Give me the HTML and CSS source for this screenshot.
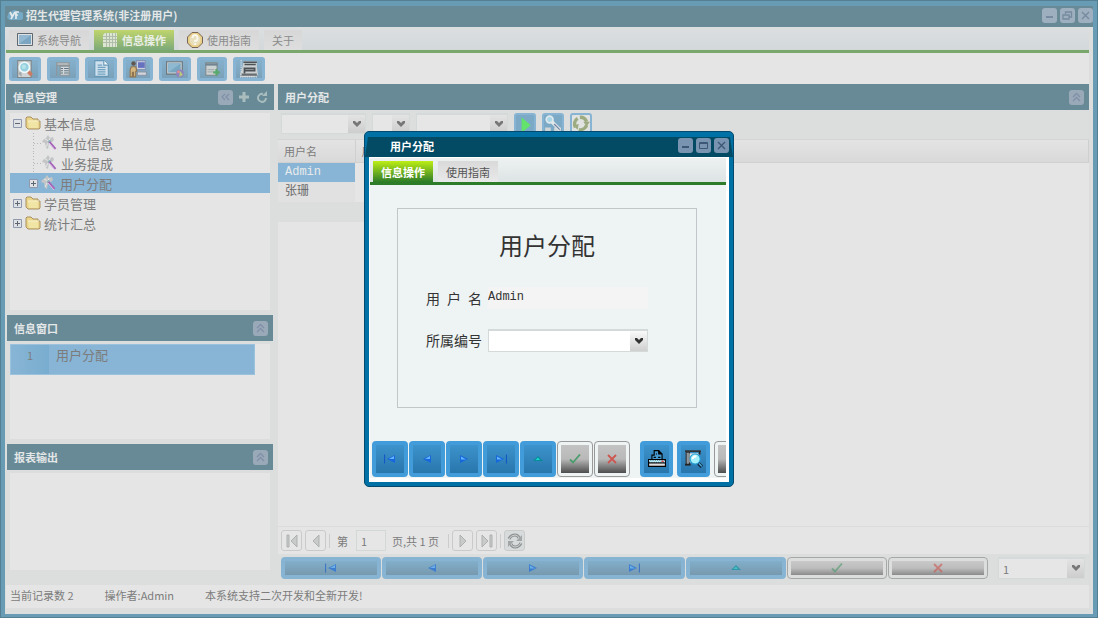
FILE: index.html
```
<!DOCTYPE html>
<html lang="zh-CN">
  <head>
    <title>招生代理管理系统</title>
    <meta charset="UTF-8">
    <meta name="viewport" content="width=device-width, initial-scale=1">
    <link rel="stylesheet" href="styles.css">
  </head>
  <body>
    <!-- shared icons -->
    <svg class="defs" aria-hidden="true">
      <symbol id="i-arrow" viewBox="0 0 10 8"><path d="M1 1h2l2 2 2-2h2v2L5 7 1 3z" fill="currentColor"/></symbol>
      <symbol id="i-up" viewBox="0 0 15 15"><path d="M4 7l3.500-3.500L11 7M4 11l3.500-3.500L11 11" fill="none" stroke="#8190a8" stroke-width="1.300"/></symbol>
      <symbol id="i-min" viewBox="0 0 15 15"><path d="M4 9h7" fill="none" stroke="currentColor" stroke-width="2"/></symbol>
      <symbol id="i-max" viewBox="0 0 15 15"><path d="M3.500 4.500h8v6h-8zM3 5.500h9" fill="none" stroke="currentColor"/></symbol>
      <symbol id="i-restore" viewBox="0 0 15 15"><path d="M5.500 6V4h6v5H9M3 7h6v4H3z" fill="none" stroke="currentColor" stroke-width="1.300"/></symbol>
      <symbol id="i-close" viewBox="0 0 15 15"><path d="M4 4l7 7M11 4l-7 7" fill="none" stroke="currentColor" stroke-width="1.400"/></symbol>
      <symbol id="i-first" viewBox="0 0 12 10"><path d="M.5.500v9" stroke="#1458c8" stroke-width="1.200"/><path d="M11 1v8L3 5z" fill="#1767dc"/><path d="M10 2v3H5z" fill="#63b5ff"/></symbol>
      <symbol id="i-prev" viewBox="0 0 12 10"><path d="M10 1v8L2 5z" fill="#1767dc"/><path d="M9 2v3H4z" fill="#63b5ff"/></symbol>
      <symbol id="i-next" viewBox="0 0 12 10"><path d="M2 1v8l8-4z" fill="#1767dc"/><path d="M3 2.500v3h5z" fill="#63b5ff"/></symbol>
      <symbol id="i-last" viewBox="0 0 12 10"><path d="M11.500.500v9" stroke="#1458c8" stroke-width="1.200"/><path d="M1 1v8l8-4z" fill="#1767dc"/><path d="M2 2.500v3h5z" fill="#63b5ff"/></symbol>
      <symbol id="i-top" viewBox="0 0 12 10"><path d="M1 7l5-5 5 5z" fill="#078c98"/><path d="M3.500 6L6 3.500 8 6z" fill="#1dd6d3"/></symbol>
      <symbol id="i-ok" viewBox="0 0 12 10"><path d="M1 5.500l3 3 7-8" fill="none" stroke="#4c9c6d" stroke-width="1.800"/></symbol>
      <symbol id="i-no" viewBox="0 0 12 10"><path d="M2 1l8 8M10 1L2 9" fill="none" stroke="#cd5650" stroke-width="1.800"/></symbol>
      <symbol id="i-folder" viewBox="0 0 16 14"><path d="M1 11V2l1-1h4l2 2h5v2h2v7l-1 1H3z" fill="#ead589" stroke="#a89062"/><path d="M3 5h10v7H4z" fill="#f0e5a4"/><path d="M3 5h11" stroke="#faf2cf"/></symbol>
      <symbol id="i-wand" viewBox="0 0 16 16"><path d="M1 5l3-2 2-3 2 3 3-1 1 3-2 2-3 1-1 6-2-1-1-5-3-1z" fill="#c3c5c6"/><path d="M3 4l4 2 1-3M6 8l-2 4" stroke="#e5e5e5" fill="none"/><circle cx="7.500" cy="6.500" r="1.500" fill="#8ab2ba"/><path d="M7.500 7l6 7" stroke="#a464b8" stroke-width="2"/><path d="M7 8l6 7" stroke="#dec3e6"/></symbol>
      <symbol id="i-plus" viewBox="0 0 9 9"><path d="M.5.5h8v8h-8z" fill="#dfe1e5" stroke="#8e99ad"/><path d="M2 4.500h5M4.500 2v5" stroke="#5e6673"/></symbol>
      <symbol id="i-minus" viewBox="0 0 9 9"><path d="M.5.5h8v8h-8z" fill="#dfe1e5" stroke="#8e99ad"/><path d="M2 4.500h5" stroke="#5e6673"/></symbol>
    </svg>

    <header class="titlebar">
      <svg class="logo" viewBox="0 0 16 14"><path d="M3 12a3 3 0 0 1-2-5 3 3 0 0 1 3-3 4 4 0 0 1 7 0 4 4 0 0 1 3 8z" fill="#75a9c5"/><path d="M3 4l2 4M8 4l-4 7M12 4H9v7M8 7h3" fill="none" stroke="#e3e9ec" stroke-width="1.700"/></svg>
      <h1>招生代理管理系统(非注册用户)</h1>
      <button class="tool" aria-label="最小化"><svg><use href="#i-min"/></svg></button>
      <button class="tool" aria-label="还原"><svg><use href="#i-restore"/></svg></button>
      <button class="tool" aria-label="关闭"><svg><use href="#i-close"/></svg></button>
    </header>

    <div class="window">
      <nav class="tabs">
        <button class="tab"><svg viewBox="0 0 16 16"><path d="M.5 1.500h15v12H.5z" fill="#dfe2e3" stroke="#5f6770"/><path d="M2 3h12v9H2z" fill="#7ba5c0"/><path d="M2 12L14 3H2z" fill="#93b9d2"/></svg>系统导航</button>
        <button class="tab active"><svg viewBox="0 0 16 16"><path d="M3 1h12v14H1V3z" fill="#dce6d3"/><path d="M1 4.500h14M1 7.500h14M1 10.500h14M4.500 1v14M7.500 1v14M10.500 1v14M13.500 1v14" stroke="#b1bdab"/></svg>信息操作</button>
        <button class="tab"><svg viewBox="0 0 16 16"><path d="M5 .500h6L15.500 5v6L11 15.500H5L.5 11V5z" fill="#e9cf86" stroke="#77675b"/><circle cx="8" cy="8" r="5.500" fill="#e8dfbd"/><path d="M5.500 6q0-3 2.500-3t2.500 3-2.500 3v1M8 11v2" stroke="#faf8ed" stroke-width="1.800" fill="none"/></svg>使用指南</button>
        <button class="tab">关于</button>
      </nav>

      <div class="toolbar">
        <button aria-label="查询"><svg viewBox="0 0 16 16"><path d="M1.500.500h12v15h-12z" fill="#cfd3d5" stroke="#7e878c"/><path d="M2 12l3-3v6z" fill="#a5aaac"/><circle cx="7.500" cy="6.500" r="4.500" fill="#93cfdf" stroke="#eef7f9" stroke-width="1.500"/><circle cx="7" cy="6" r="2" fill="#b6e3ea"/><path d="M11 10.500l3 3" stroke="#cd7b61" stroke-width="3"/></svg></button>
        <button aria-label="列表"><svg viewBox="0 0 16 16"><path d="M2.500 2.500h11v2h-11zM5.500 5.500h8v8h-8zM2.500 5v9" fill="#d3d9dc" stroke="#8d9496"/><path d="M6 7.500h2m1 0h4M6 9.500h2m1 0h4M6 11.500h2m1 0h4" stroke="#5f7480"/></svg></button>
        <button aria-label="文档"><svg viewBox="0 0 16 16"><path d="M2.500.500h8l4 4v10h-12z" fill="#cfe1ec" stroke="#6498b7"/><path d="M10.500.500v4h4" fill="#fff" stroke="#6498b7"/><path d="M5 4.500h4M5 6.500h7M5 8.500h7M5 10.500h7M5 12.500h7" stroke="#71a3c1"/></svg></button>
        <button class="narrow" aria-label="用户"><svg viewBox="0 0 16 16"><path d="M6.500.500h8v8h-8z" fill="#ccd2dc" stroke="#8695b5"/><path d="M8 2h6v5H8z" fill="#6671c0"/><path d="M7.500 10.500h8v3h-8z" fill="#d4d6db" stroke="#8795a8"/><circle cx="4" cy="3" r="2" fill="#60584f"/><path d="M2 6h4l1 4H6v5H4v-4H3v4H1V9z" fill="#d5b67f" stroke="#8d7553"/></svg></button>
        <button aria-label="网络"><svg viewBox="0 0 16 16"><path d="M.5 1.500h14v11H.5z" fill="#c5ced2" stroke="#6d777e"/><path d="M2 3h11v8H2z" fill="#79a6c0"/><path d="M2 11l11-8H2z" fill="#8fb9d1"/><circle cx="12.500" cy="12" r="3.500" fill="#8d84bd"/><path d="M12 9l3 4-3 2z" fill="#b9cb7a"/><path d="M10 11l2-1" stroke="#df8a95" stroke-width="2"/></svg></button>
        <button class="narrow" aria-label="添加"><svg viewBox="0 0 16 16"><path d="M2.500 2.500h10v11h-10z" fill="#ccd1d2" stroke="#7f898c"/><path d="M2 4h11" stroke="#708591" stroke-width="2"/><path d="M4 8.500h6M4 10.500h5" stroke="#a7afb1"/><path d="M12 8v6M9 11h6" stroke="#5aa96c" stroke-width="2"/></svg></button>
        <button aria-label="打印"><svg viewBox="0 0 16 16"><path d="M3 1h12v5l1 7-3 2H2l-2-2 2-6z" fill="#cbd0d2"/><path d="M3 2h12M4 4h10M4 7.500h9v2H4zM4 7v5" fill="none" stroke="#4b5155" stroke-width="1.500"/><path d="M1 13h14" stroke="#686d70" stroke-width="2"/><path d="M1 0v16M0 15h16" stroke="#dce2e5" stroke-dasharray="1 1"/></svg></button>
      </div>

      <main class="layout">
        <aside class="side">
          <section class="panel tree-panel">
            <header class="panel-head"><h2>信息管理</h2>
              <button class="tool" aria-label="收起"><svg viewBox="0 0 15 15"><path d="M7 4L4 7l3 3M11 4L8 7l3 3" fill="none" stroke="#8190a8" stroke-width="1.300"/></svg></button>
              <button class="plain" aria-label="添加"><svg viewBox="0 0 12 12"><path d="M6 1v10M1 6h10" stroke="#a9bdbf" stroke-width="3"/></svg></button>
              <button class="plain" aria-label="刷新"><svg viewBox="0 0 12 12"><path d="M7 3A4 4 0 1 0 10 7" fill="none" stroke="#a9bdbf" stroke-width="2"/><path d="M6 5l5-5v5z" fill="#a9bdbf"/></svg></button>
            </header>
            <div class="panel-body">
              <ul class="tree">
                <li><svg class="exp"><use href="#i-minus"/></svg><svg class="folder"><use href="#i-folder"/></svg>基本信息</li>
                <li class="child leaf"><svg class="wand"><use href="#i-wand"/></svg>单位信息</li>
                <li class="child leaf"><svg class="wand"><use href="#i-wand"/></svg>业务提成</li>
                <li class="child selected"><svg class="exp"><use href="#i-plus"/></svg><svg class="wand"><use href="#i-wand"/></svg>用户分配</li>
                <li><svg class="exp"><use href="#i-plus"/></svg><svg class="folder"><use href="#i-folder"/></svg>学员管理</li>
                <li><svg class="exp"><use href="#i-plus"/></svg><svg class="folder"><use href="#i-folder"/></svg>统计汇总</li>
              </ul>
            </div>
          </section>

          <section class="panel list-panel">
            <header class="panel-head"><h2>信息窗口</h2><button class="tool" aria-label="折叠"><svg><use href="#i-up"/></svg></button></header>
            <div class="panel-body">
              <div class="list">
                <div class="list-row"><span class="num">1</span><span class="name">用户分配</span></div>
              </div>
            </div>
          </section>

          <section class="panel report-panel">
            <header class="panel-head"><h2>报表输出</h2><button class="tool" aria-label="折叠"><svg><use href="#i-up"/></svg></button></header>
            <div class="panel-body"><div class="list"></div></div>
          </section>
        </aside>

        <section class="content">
          <header class="panel-head"><h2>用户分配</h2><button class="tool" aria-label="折叠"><svg><use href="#i-up"/></svg></button></header>
          <div class="filter">
            <span class="combo c-field"><select aria-label="字段"><option></option></select><svg><use href="#i-arrow"/></svg></span>
            <span class="combo c-op"><select aria-label="条件"><option></option></select><svg><use href="#i-arrow"/></svg></span>
            <span class="combo c-value"><select aria-label="值"><option></option></select><svg><use href="#i-arrow"/></svg></span>
            <button aria-label="执行"><svg viewBox="0 0 16 16"><path d="M5 2l8 7-8 7z" fill="#64e36c"/></svg></button>
            <button aria-label="查找"><svg viewBox="0 0 16 16"><path d="M1 11h5v5H1zM9 11h6v5H9z" fill="#d0d5d8"/><circle cx="5" cy="4" r="3" fill="#a9d7e8" stroke="#dfe9ed" stroke-width="1.500"/><path d="M7 6l7 7" stroke="#e3e8ea" stroke-width="3"/><path d="M9 8l5 5" stroke="#6c7fa0"/></svg></button>
            <button class="light" aria-label="刷新"><svg viewBox="0 0 16 16"><path d="M3 11A6 6 0 0 1 5 3M7 2a6 6 0 0 1 6 4M13 9a6 6 0 0 1-7 4" fill="none" stroke="#9dac80" stroke-width="3"/><path d="M1 9l5-1-1 5zM10 6h6l-3 4z" fill="#9dac80"/></svg></button>
          </div>
          <div class="grid">
            <table>
              <thead><tr><th class="col-name">用户名</th><th>用户</th></tr></thead>
              <tbody>
                <tr><td class="picked">Admin</td><td></td></tr>
                <tr class="alt"><td>张珊</td><td></td></tr>
                <tr class="sum"><td></td><td></td></tr>
              </tbody>
            </table>
          </div>
          <div class="paging">
            <button aria-label="首页"><svg viewBox="0 0 16 16"><path d="M3 2h2v12H3zM13 2v12L7 8z" fill="#c9caca" stroke="#adb0b1"/></svg></button>
            <button aria-label="上一页"><svg viewBox="0 0 16 16"><path d="M11 2v12L5 8z" fill="#c9caca" stroke="#adb0b1"/></svg></button>
            <i class="sep"></i>
            <label for="page">第</label>
            <input type="text" id="page" value="1">
            <span class="total">页,共 1 页</span>
            <i class="sep"></i>
            <button aria-label="下一页"><svg viewBox="0 0 16 16"><path d="M5 2v12l6-6z" fill="#c9caca" stroke="#adb0b1"/></svg></button>
            <button aria-label="末页"><svg viewBox="0 0 16 16"><path d="M3 2v12l6-6zM11 2h2v12h-2z" fill="#c9caca" stroke="#adb0b1"/></svg></button>
            <i class="sep"></i>
            <button class="reload" aria-label="刷新"><svg viewBox="0 0 16 16"><path d="M2 6q2-4 6-4 3 0 4 3M14 10q-2 4-6 4-3 0-4-3" fill="none" stroke="#8f9292" stroke-width="3"/><path d="M2 6q2-4 6-4 3 0 4 3M14 10q-2 4-6 4-3 0-4-3" fill="none" stroke="#cfd1d1"/><path d="M15 2v6H9zM1 14V8h6z" fill="#a3a6a6"/></svg></button>
          </div>
          <div class="navbar">
            <div class="nav-group">
              <button class="nav" aria-label="第一条"><svg><use href="#i-first"/></svg></button>
              <button class="nav" aria-label="上一条"><svg><use href="#i-prev"/></svg></button>
              <button class="nav" aria-label="下一条"><svg><use href="#i-next"/></svg></button>
              <button class="nav" aria-label="最后一条"><svg><use href="#i-last"/></svg></button>
              <button class="nav" aria-label="编辑"><svg><use href="#i-top"/></svg></button>
              <button class="nav off" aria-label="保存"><svg><use href="#i-ok"/></svg></button>
              <button class="nav off" aria-label="取消"><svg><use href="#i-no"/></svg></button>
            </div>
            <span class="combo c-page"><select aria-label="页码"><option>1</option></select><svg><use href="#i-arrow"/></svg></span>
          </div>
        </section>
      </main>

      <footer class="status">
        <span>当前记录数 2</span><span>操作者:Admin</span><span>本系统支持二次开发和全新开发!</span>
      </footer>
    </div>

    <div class="dialog" role="dialog" aria-labelledby="dlg-title">
      <header class="dialog-head">
        <h2 id="dlg-title">用户分配</h2>
        <button class="tool" aria-label="最小化"><svg><use href="#i-min"/></svg></button>
        <button class="tool" aria-label="最大化"><svg><use href="#i-max"/></svg></button>
        <button class="tool" aria-label="关闭"><svg><use href="#i-close"/></svg></button>
      </header>
      <div class="dialog-body">
        <nav class="dialog-tabs">
          <button class="tab active">信息操作</button>
          <button class="tab">使用指南</button>
        </nav>
        <form class="form">
          <h3>用户分配</h3>
          <div class="row">
            <label for="user" class="spread"><span>用</span><span>户</span><span>名</span></label>
            <input type="text" id="user" value="Admin" readonly>
          </div>
          <div class="row">
            <label for="code">所属编号</label>
            <span class="combo c-code"><select id="code"><option></option></select><svg><use href="#i-arrow"/></svg></span>
          </div>
        </form>
        <div class="actions">
          <button class="nav" aria-label="第一条"><svg><use href="#i-first"/></svg></button>
          <button class="nav" aria-label="上一条"><svg><use href="#i-prev"/></svg></button>
          <button class="nav" aria-label="下一条"><svg><use href="#i-next"/></svg></button>
          <button class="nav" aria-label="最后一条"><svg><use href="#i-last"/></svg></button>
          <button class="nav" aria-label="编辑"><svg><use href="#i-top"/></svg></button>
          <button class="nav off" aria-label="保存"><svg><use href="#i-ok"/></svg></button>
          <button class="nav off" aria-label="取消"><svg><use href="#i-no"/></svg></button>
          <button class="nav big" aria-label="打印"><svg viewBox="0 0 16 16"><path d="M3.500 8V4.500h2v-4h4l3 3V8" fill="#459bd1" stroke="#000"/><path d="M9.500.500v3h3M7 3.500h1M5 6.500h2M9 6.500h2" stroke="#000"/><path d="M.5 8.500h15v3H.5z" fill="#6dd4ec" stroke="#000"/><path d="M1 9.500h14M2 10.500h13" stroke="#fff" stroke-dasharray="1 1"/><path d="M.5 11.500h15v3H.5z" fill="#ddd" stroke="#000"/><path d="M12 10h2" stroke="#e22"/></svg></button>
          <button class="nav big" aria-label="预览"><svg viewBox="0 0 16 16"><path d="M0 1h14" stroke="#333" stroke-width="1.500"/><path d="M1 2h3v11H1z" fill="#8d979d" stroke="#333"/><path d="M4 3h8v8H4z" fill="#e3e8ea"/><path d="M0 13h5M13 1v3" stroke="#222" stroke-width="1.500"/><circle cx="9" cy="8" r="4.500" fill="#a4effc" stroke="#249ed3"/><path d="M7 8a2 2 0 0 1 3-2" stroke="#fff" stroke-width="2" fill="none"/><path d="M12 12l3 3" stroke="#102840" stroke-width="3"/><path d="M12.500 12l2.500 2.500" stroke="#59bfed"/></svg></button>
          <button class="nav off big" aria-label="更多"></button>
        </div>
      </div>
    </div>
  </body>
</html>
```
FILE: styles.css
```
* {
	box-sizing: border-box;
}
body {
	margin: 0;
	min-height: 100vh;
	display: flex;
	flex-direction: column;
	background-color: #689cb5;
	border: 1px solid #557f93;
	padding: 0 4px 3px;
	font-family: "Noto Sans CJK SC", sans-serif;
	font-size: 11px;
	color: #7c7c7c;
}
h1, h2, h3, ul {
	margin: 0;
	padding: 0;
}
h1, h2 {
	font-size: 11px;
	line-height: 16px;
	font-weight: bold;
	color: #e4e7e8;
	flex: 1;
}
button, input, select {
	font-family: inherit;
	font-size: inherit;
	color: inherit;
	margin: 0;
	padding: 0;
	border: none;
	border-radius: 0;
}
.defs {
	position: absolute;
	width: 0;
	height: 0;
}

/* main window */
.titlebar {
	display: flex;
	align-items: center;
	height: 26px;
	gap: 3px;
	padding: 0 0 3px 2px;
	border-top: 5px solid #689cb5;
	background-color: #688a96;
}
.logo {
	width: 16px;
	height: 14px;
}
.tool {
	width: 15px;
	height: 15px;
	border-radius: 3px;
	background-color: #9eafbf;
	color: #768aa0;
}
.tool svg, .plain svg {
	display: block;
	width: 100%;
	height: 100%;
}
.window {
	flex: 1;
	display: flex;
	flex-direction: column;
	border: 1px solid #dcdedd;
	border-width: 0 4px 6px 1px;
	background-color: #e5e5e5;
}
.tabs {
	display: flex;
	gap: 5px;
	height: 26px;
	padding: 3px 3px 0;
	background: linear-gradient(#dcdfe0, #d3d8da);
	border-bottom: 3px solid #7aa76b;
}
.tab {
	display: flex;
	align-items: center;
	gap: 4px;
	height: 20px;
	padding: 0 8px;
	background: linear-gradient(#d7d7d7, #dedede);
	color: #8b8b8b;
	white-space: nowrap;
}
.tab svg {
	width: 16px;
	height: 16px;
}
.tab.active {
	background: linear-gradient(#bfd56d, #7da979);
	color: #e9eee6;
	font-weight: bold;
}
.toolbar {
	display: flex;
	align-items: center;
	gap: 6px;
	height: 31px;
	padding: 0 3px;
}
.toolbar button {
	width: 32px;
	height: 24px;
	border: 3px solid #88b4d3;
	border-radius: 3px;
	background: linear-gradient(#85b0cc, #7ba1b9);
}
.toolbar .narrow {
	width: 30px;
}
.toolbar svg {
	display: block;
	width: 18px;
	height: 18px;
	margin: auto;
}
.layout {
	flex: 1;
	display: grid;
	grid-template-columns: 268px 1fr;
	gap: 4px;
	background-color: #dcdedd;
}

/* panels */
.panel-head {
	display: flex;
	align-items: center;
	gap: 4px;
	height: 26px;
	padding: 0 5px 0 7px;
	background-color: #688a96;
}
.panel-head .tool {
	background-color: #99a9b8;
}
.plain {
	width: 14px;
	height: 14px;
	padding: 1px;
	background: none;
}
.side {
	display: flex;
	flex-direction: column;
}
.panel {
	display: flex;
	flex-direction: column;
}
.list-panel, .report-panel {
	margin: 0 1px;
}
.tree-panel {
	height: 231px;
}
.list-panel {
	height: 129px;
}
.report-panel {
	flex: 1;
}
.panel-body {
	flex: 1;
	display: flex;
	padding: 3px 4px 5px;
}
.list-panel .panel-body, .report-panel .panel-body {
	padding-left: 3px;
	padding-right: 3px;
}
.report-panel .panel-body {
	padding-bottom: 15px;
}
.tree, .list {
	flex: 1;
	background-color: #e5e5e5;
}
.tree {
	list-style: none;
	font-size: 13px;
}
.tree li {
	display: flex;
	align-items: center;
	height: 20px;
	gap: 3px;
	padding-left: 3px;
}
.tree .child {
	padding-left: 19px;
}
.tree .leaf {
	padding-left: 32px;
	background: repeating-linear-gradient(#b8b8b8 0 1px, transparent 1px 3px) 23px 0 / 1px 100% no-repeat,
		repeating-linear-gradient(90deg, #b8b8b8 0 1px, transparent 1px 3px) 24px 10px / 7px 1px no-repeat;
}
.tree .selected {
	background-color: #88b5d5;
}
.exp {
	width: 9px;
	height: 9px;
}
.folder {
	width: 16px;
	height: 14px;
}
.wand {
	width: 16px;
	height: 16px;
}
.list-row {
	display: flex;
	width: 245px;
	height: 31px;
	background-color: #88b5d5;
	border: 1px solid #9bc2dc;
}
.list-row .num {
	width: 38px;
	line-height: 20px;
	text-align: center;
	background: linear-gradient(90deg, #88b5d5, #79adcf);
}
.list-row .name {
	padding-left: 7px;
	font-size: 13px;
	line-height: 19px;
}

/* right side */
.content {
	display: flex;
	flex-direction: column;
}
.filter {
	display: flex;
	height: 29px;
	padding: 3px;
	gap: 6px;
	overflow: hidden;
}
.filter button {
	width: 22px;
	height: 22px;
	border: 2px solid #88b4d3;
	border-radius: 3px;
	background-color: #7ba9c6;
}
.filter .light {
	background-color: #e0e3e2;
}
.filter button svg {
	display: block;
	width: 18px;
	height: 18px;
}
.combo {
	display: grid;
	height: 21px;
}
.combo > * {
	grid-area: 1 / 1;
}
.combo select {
	appearance: none;
	width: 100%;
	height: 100%;
	padding-left: 4px;
	border: 1px solid #d4dada;
	border-top-width: 2px;
	background: linear-gradient(#e3e3e3, #cdcdcd) right / 17px 100% no-repeat #e6e6e6;
}
.combo svg {
	justify-self: end;
	align-self: center;
	width: 10px;
	height: 8px;
	margin-right: 4px;
	color: #777;
	pointer-events: none;
}
.c-field {
	width: 85px;
}
.c-op {
	width: 38px;
}
.c-value {
	width: 92px;
}
.grid {
	flex: 1;
	border-top: 1px solid #d3d5d5;
	background-color: #e5e5e5;
}
.grid table {
	width: 100%;
	border-collapse: collapse;
	table-layout: fixed;
}
.grid th {
	height: 22px;
	padding: 0 6px;
	text-align: left;
	font-weight: normal;
	background: linear-gradient(#e3e3e3, #d9d9d9);
	border-right: 1px solid #cfcfcf;
	border-bottom: 1px solid #d0d0d0;
}
.grid .col-name {
	width: 77px;
}
.grid td {
	height: 20px;
	padding: 0 7px;
	font-family: "Liberation Mono", "Noto Sans CJK SC", monospace;
	font-size: 12px;
	line-height: 18px;
	color: #696969;
}
.grid .picked {
	background-color: #88b5d5;
	color: #e7eaec;
}
.grid .alt td:first-child {
	background-color: #e1e1e1;
}
.grid .sum td {
	background-color: #dcdedd;
}
.grid .sum td:last-child {
	background: linear-gradient(#dcdedd, #dcdedd) left / 20px 100% no-repeat;
}
.paging {
	display: flex;
	align-items: center;
	gap: 3px;
	height: 28px;
	padding: 0 3px;
	border-top: 1px solid #dadcdc;
	background-color: #e5e5e5;
}
.paging button {
	width: 21px;
	height: 21px;
	border: 1px solid #c9cbcb;
	border-radius: 3px;
	background-color: #e6e6e6;
}
.paging .reload {
	background-color: #d7dbdb;
}
.paging button svg {
	display: block;
	width: 16px;
	height: 16px;
	margin: auto;
}
.paging input {
	width: 30px;
	height: 21px;
	padding-left: 4px;
	border: 1px solid #d2d7d7;
	background-color: #e6e6e6;
}
.paging label {
	margin: 0 5px 0 4px;
}
.paging .total {
	margin: 0 6px 0 3px;
}
.sep {
	width: 1px;
	height: 14px;
	background-color: #cbcccc;
}
.navbar {
	display: flex;
	gap: 10px;
	height: 31px;
	padding: 3px 4px 6px 3px;
}
.nav-group {
	flex: 1;
	display: flex;
	gap: 1px;
}
.nav {
	flex: 1;
	border: 4px solid #88b4d3;
	border-radius: 4px;
	background: linear-gradient(#82aeca, #7799ae);
}
.nav svg {
	display: block;
	width: 12px;
	height: 10px;
	margin: auto;
}
.nav-group svg {
	opacity: .6;
}
.nav.off {
	border: 1px solid #a7a7a7;
	padding: 3px;
	background: linear-gradient(#c9c9c9, #bdbdbd 50%, #8b8b8b) content-box #dedede;
}
.navbar .combo {
	width: 87px;
	height: 22px;
}
.status {
	display: flex;
	gap: 31px;
	height: 23px;
	padding-left: 4px;
	line-height: 20px;
}

/* popup window */
.dialog {
	position: absolute;
	inset: 0;
	margin: auto;
	width: 370px;
	height: 356px;
	display: flex;
	flex-direction: column;
	padding: 5px 4px 4px;
	border: 1px solid #034a6e;
	border-radius: 5px;
	background-color: #0071a5;
}
.dialog-head {
	display: flex;
	align-items: center;
	gap: 3px;
	height: 20px;
	margin: 0 -4px;
	padding: 0 4px 3px 25px;
	background-color: #034b64;
	clip-path: polygon(3px 0, calc(100% - 3px) 0, 100% 100%, 0 100%);
}
.dialog-head h2 {
	color: #fff;
}
.dialog-head .tool {
	background-color: #7894b0;
	color: #3d5876;
}
.dialog-body {
	flex: 1;
	display: flex;
	flex-direction: column;
	overflow: hidden;
	border: 1px solid #fff;
	border-width: 1px 3px 4px 1px;
	background-color: #eef3f4;
}
.dialog-tabs {
	display: flex;
	gap: 5px;
	height: 27px;
	padding: 3px 3px 0;
	background: linear-gradient(#edf1f2, #dde4e4);
	border-bottom: 3px solid #2c7c28;
}
.dialog-tabs .tab {
	height: 21px;
	background: linear-gradient(#d9d9d9, #e9e9e9);
	color: #555;
}
.dialog-tabs .active {
	background: linear-gradient(#bdee15, #2c7c28);
	color: #fff;
}
.form {
	width: 300px;
	height: 200px;
	margin: 23px 0 0 27px;
	padding: 18px 28px;
	border: 1px solid #c1c6c8;
	color: #333;
}
.form h3 {
	font-size: 24px;
	line-height: 36px;
	font-weight: normal;
	text-align: center;
	margin-bottom: 24px;
}
.row {
	display: flex;
	align-items: center;
	gap: 6px;
	height: 22px;
	margin-bottom: 20px;
	font-size: 14px;
}
.row label {
	width: 56px;
}
.row .spread {
	display: flex;
	justify-content: space-between;
}
.row input {
	width: 160px;
	height: 22px;
	padding-bottom: 2px;
	font-family: "Liberation Mono", monospace;
	font-size: 12px;
	background-color: #f4f4f4;
}
.row .combo {
	width: 160px;
	height: 22px;
}
.row .combo select {
	background: linear-gradient(#fafafa, #cfcfcf) right / 17px 100% no-repeat #fff;
}
.row .combo svg {
	color: #333;
}
.actions {
	display: flex;
	gap: 1px;
	margin: auto 0 1px 2px;
}
.actions .nav {
	flex: none;
	width: 36px;
	height: 36px;
	border-color: #429cda;
	background: linear-gradient(#3d93cc, #2876ac);
}
.actions .off {
	border-color: #999;
	background: linear-gradient(#c3c3c3, #b9b9b9 50%, #4d4d4d) content-box #f3f3f3;
}
.actions .big {
	width: 33px;
	margin-left: 3px;
}
.actions .off + .big:not(.off) {
	margin-left: 9px;
}
.actions .big svg {
	width: 18px;
	height: 18px;
}
```
